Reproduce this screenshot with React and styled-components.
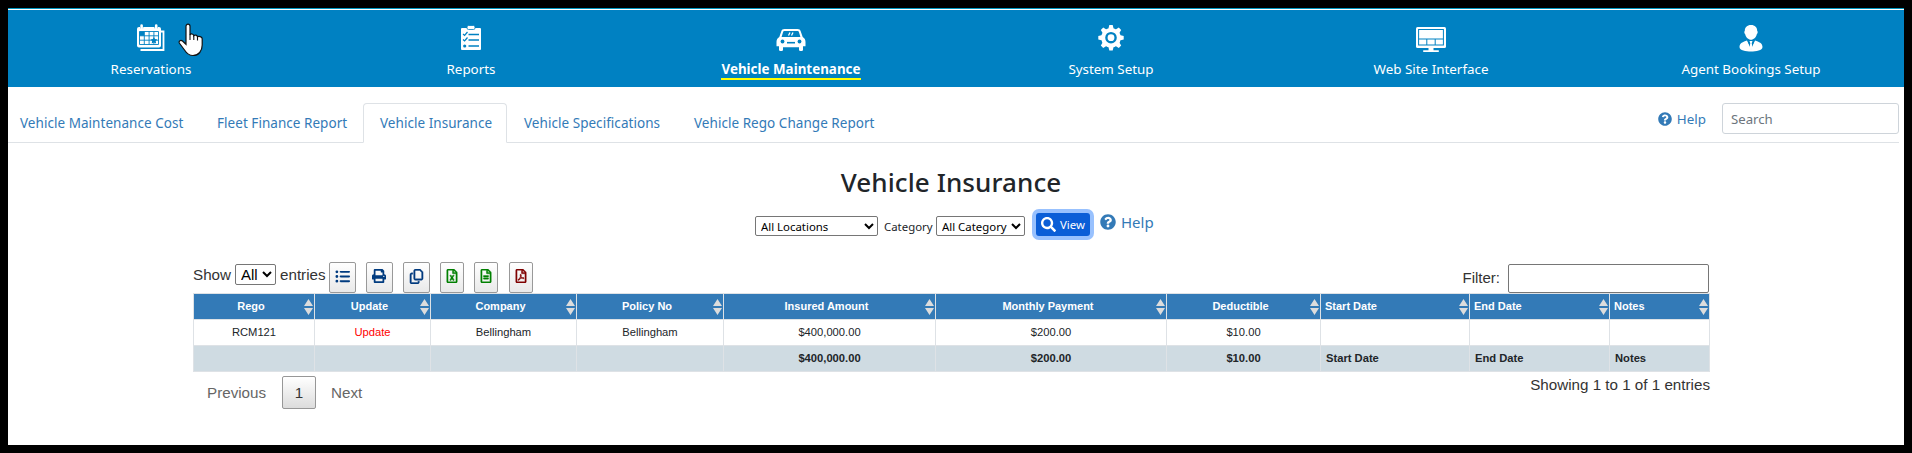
import styled, { createGlobalStyle } from "styled-components";
import {
  FaPrint,
  FaQuestionCircle,
  FaRegFileAlt,
  FaRegFileExcel,
  FaRegFilePdf,
  FaSearch,
} from "react-icons/fa";
import { FaListUl, FaRegCopy } from "react-icons/fa6";

const GlobalStyle = createGlobalStyle`
  * {
    box-sizing: border-box;
  }
  body {
    margin: 0;
    background-color: #000;
    font-family: "Noto Sans", "Open Sans", sans-serif;
    color: #212529;
  }
`;

const Page = styled.div`
  position: relative;
  width: 1896px;
  height: 437px;
  margin: 8px 8px 0 8px;
  overflow: hidden;
  background-color: #fff;
  border-top: 1px solid #0096bf;
`;

const Navbar = styled.nav`
  display: flex;
  justify-content: center;
  height: 77px;
  margin: 1px 0 0 -10px;
  background-color: #0081c2;
`;

const NavItem = styled.a`
  flex: 0 0 320px;
  display: flex;
  flex-direction: column;
  align-items: center;
  padding-top: 13px;
  color: #fff;
  svg {
    display: block;
    flex: none;
  }
`;

const NavLabel = styled.span`
  height: 22px;
  margin-top: 5px;
  line-height: 22px;
  font-size: 13.4px;
  white-space: nowrap;
  font-weight: ${(props) => (props.$active ? 700 : 400)};
  border-bottom: ${(props) => (props.$active ? "2px solid #ff0" : "0")};
`;

const TabBar = styled.div`
  display: flex;
  justify-content: space-between;
  height: 40px;
  margin: 16px 5px 0 0;
  border-bottom: 1px solid #dee2e6;
`;

const Tabs = styled.div`
  display: flex;
`;

const Tab = styled.a`
  width: ${(props) => props.$width}px;
  height: 40px;
  padding: ${(props) => (props.$first ? "0 0 0 12px" : "0 0 0 16px")};
  border: 1px solid transparent;
  border-width: ${(props) => (props.$first ? "1px 0" : "1px")};
  line-height: 39px;
  font-size: 13.5px;
  letter-spacing: 0.04px;
  white-space: nowrap;
  color: #337ab7;
  ${(props) =>
    props.$active &&
    `
    background-color: #fff;
    border-color: #dee2e6 #dee2e6 #fff;
    border-radius: 4px 4px 0 0;
  `}
`;

const TabTools = styled.div`
  display: flex;
  align-items: flex-start;
`;

const HelpLink = styled.a`
  display: flex;
  align-items: center;
  gap: 5px;
  height: 32px;
  color: #337ab7;
  font-size: ${(props) => props.$size}px;
`;

const SearchInput = styled.input`
  width: 177px;
  height: 31px;
  margin-left: 16px;
  padding: 0 8px;
  border: 1px solid #ced4da;
  border-radius: 3px;
  font: 13.2px "Noto Sans", sans-serif;
  &::placeholder {
    color: #6c757d;
  }
`;

const Title = styled.h2`
  margin: 19px 0 0 -10px;
  height: 40px;
  line-height: 40px;
  text-align: center;
  font-size: 26px;
  font-weight: 500;
  letter-spacing: 0.1px;
`;

const FilterForm = styled.div`
  display: flex;
  align-items: center;
  height: 34px;
  margin: 7px 0 0 747px;
`;

const Select = styled.select`
  width: ${(props) => props.$width}px;
  height: ${(props) => props.$height || 20}px;
  padding: 0 0 0 1px;
  background-color: #fff;
  border: 1px solid #767676;
  border-radius: 2px;
  color: #000;
  font: ${(props) => props.$font || '11.4px "Noto Sans", sans-serif'};
`;

const CategoryLabel = styled.label`
  width: 58px;
  padding-left: 6px;
  font-size: 11.4px;
  white-space: nowrap;
`;

const ViewButton = styled.button`
  display: flex;
  align-items: center;
  gap: 4px;
  width: 54px;
  height: 23px;
  margin: -3px 10px 0 11px;
  padding: 0 0 0 5px;
  border: 0;
  border-radius: 3px;
  background-color: #0b5ed7;
  box-shadow: 0 0 0 4px #98c1fe;
  color: #fff;
  font: 11.4px "Noto Sans", sans-serif;
`;

const FormHelp = styled(HelpLink)`
  margin-top: -8px;
`;

const TableSection = styled.section`
  width: 1517px;
  margin: 16px 0 0 185px;
  font-family: "Liberation Sans", Arial, sans-serif;
  color: #333;
`;

const Toolbar = styled.div`
  display: flex;
  justify-content: space-between;
  height: 34px;
`;

const LengthMenu = styled.label`
  display: flex;
  align-items: center;
  gap: 4px;
  height: 31px;
  margin-right: 3px;
  font-size: 15.2px;
`;

const ToolbarLeft = styled.div`
  display: flex;
  align-items: flex-start;
`;

const ExportButtons = styled.div`
  display: flex;
  gap: 10.2px;
  padding-top: 3px;
`;

const ExportButton = styled.button`
  display: flex;
  align-items: flex-start;
  justify-content: center;
  width: ${(props) => props.$width}px;
  height: 31px;
  padding: 6px 0 0;
  border: 1px solid #999;
  border-radius: 2px;
  background: linear-gradient(to bottom, #fff 0%, #e9e9e9 100%);
  color: ${(props) => props.$color};
`;

const FilterLabel = styled.label`
  display: flex;
  align-items: center;
  gap: 8px;
  height: 29px;
  margin: 5px 1px 0 0;
  font-size: 15px;
  line-height: 16px;
`;

const FilterText = styled.span`
  margin-top: -2px;
`;

const FilterInput = styled.input`
  width: 201px;
  height: 29px;
  border: 1px solid #767676;
  border-radius: 2px;
`;

const Table = styled.table`
  width: 1517px;
  table-layout: fixed;
  border-collapse: collapse;
  font-size: 11.2px;
  color: #212529;
`;

const HeadCell = styled.th`
  position: relative;
  height: 26px;
  padding: ${(props) => (props.$align === "left" ? "0 0 1px 4px" : "0 6px 1px 0")};
  border: 1px solid #dee2e6;
  background-color: #337ab7;
  color: #fff;
  font-size: 11px;
  text-align: ${(props) => props.$align || "center"};
`;

const Cell = styled.td`
  height: 26px;
  padding: ${(props) => (props.$align === "left" ? "0 0 1px 5px" : "0 0 1px")};
  border: 1px solid #dee2e6;
  text-align: ${(props) => props.$align || "center"};
`;

const FootCell = styled(Cell)`
  background-color: #cfdbe2;
  font-weight: 700;
`;

const UpdateLink = styled.a`
  color: #f00;
`;

const SortArrows = styled.svg`
  position: absolute;
  right: 1px;
  top: 5px;
`;

const TableFooter = styled.div`
  display: flex;
  justify-content: space-between;
  align-items: flex-start;
  padding-top: 4px;
  font-size: 15.2px;
`;

const Pagination = styled.div`
  display: flex;
  align-items: center;
  padding-left: 14px;
  color: #666;
`;

const PageNumber = styled.span`
  width: 34px;
  height: 33px;
  margin: 0 15px 0 16px;
  border: 1px solid #979797;
  border-radius: 2px;
  background: linear-gradient(to bottom, #fff 0%, #dcdcdc 100%);
  color: #333;
  line-height: 31px;
  text-align: center;
`;

const Cursor = styled.svg`
  position: absolute;
  left: 169px;
  top: 14px;
`;

const CalendarIcon = () => (
  <svg width="30" height="30" viewBox="0 0 30 30" fill="none">
    <path d="M4.5 27h23V8.5H25" stroke="#fff" strokeWidth="1.8" />
    <rect x="1" y="4" width="24" height="20.5" rx="2" fill="#fff" />
    <path d="M4 4h3.2M18.5 4h3.2" stroke="#0081c2" strokeWidth="2.4" />
    <path d="M5.6 2.5v2.500M20.2 2.500v2.500" stroke="#fff" strokeWidth="2.6" strokeLinecap="round" />
    <path
      d="M3.5 8.5h19v13h-19zM3.5 12.8h19M3.5 17.2h19M8.3 8.5v13M13.1 8.5v13M17.9 8.5v13"
      stroke="#0081c2"
      strokeWidth="0.9"
    />
    <path d="M3.5 8.5h4.8v4.3H3.5z" fill="#0081c2" />
    <path d="m17.9 14 1.1 2.1 2.4.4-1.7 1.6.4 2.3-2.2-1-2.2 1 .4-2.3-1.7-1.6 2.4-.4z" fill="#0081c2" />
  </svg>
);

const ReportIcon = () => (
  <svg width="30" height="30" viewBox="0 0 30 30" fill="none">
    <rect x="5" y="5" width="20" height="22" rx="1" fill="#fff" />
    <rect x="11" y="2.5" width="8" height="4" rx="1.5" fill="#fff" stroke="#0081c2" strokeWidth="0.8" />
    <path d="M12.5 11.5H23M12.5 17H23M12.5 23H23" stroke="#0081c2" strokeWidth="1.3" />
    <path d="m7 11 1.6 1.5L11.5 9M7 16.5 8.6 18l2.9-3.5" stroke="#0081c2" strokeWidth="1.2" />
    <circle cx="8.7" cy="23" r="1.6" fill="#0081c2" />
  </svg>
);

const CarIcon = () => (
  <svg width="30" height="30" viewBox="0 0 30 30" fill="none">
    <path
      d="M8.5 6h13c1.8 0 2.7.8 3.2 2.3L26.7 14c1.9 1.1 2.8 2.7 2.8 5v4.2H27V27c0 1.3-4 1.3-4 0v-2.8H7V27c0 1.3-4 1.3-4 0v-3.8H.5V19c0-2.3.9-3.9 2.8-5l2-5.7C5.8 6.8 6.7 6 8.5 6z"
      fill="#fff"
    />
    <path d="M8.2 8h13.6c.6 0 .8.3 1 .8l1.6 5.2H5.6l1.6-5.2c.2-.5.4-.8 1-.8z" fill="#0081c2" />
    <path d="m12.5 12.500 1.5-3M15.5 12.500l1.5-3" stroke="#fff" strokeWidth="1.3" />
    <circle cx="6.5" cy="18.5" r="1.9" fill="#0081c2" />
    <circle cx="23.5" cy="18.5" r="1.9" fill="#0081c2" />
    <path d="M11 19.7h8" stroke="#0081c2" strokeWidth="1.6" />
  </svg>
);

const GearIcon = () => (
  <svg width="30" height="30" viewBox="0 0 30 30" fill="none">
    <circle cx="15" cy="14.7" r="7.8" stroke="#fff" strokeWidth="4" />
    {[0, 45, 90, 135, 180, 225, 270, 315].map((angle) => (
      <path
        key={angle}
        d="M12.3 6l1-4h3.4l1 4z"
        fill="#fff"
        transform={`rotate(${angle} 15 14.7)`}
      />
    ))}
    <circle cx="15" cy="14.7" r="3.4" fill="#fff" />
  </svg>
);

const MonitorIcon = () => (
  <svg width="30" height="30" viewBox="0 0 30 30" fill="none">
    <rect y="4" width="30" height="21" rx="1.5" fill="#fff" />
    <rect x="2.6" y="6.5" width="24.8" height="15.5" stroke="#0081c2" />
    <path d="M2.6 16h24.8M10.8 16v6M19.2 16v6" stroke="#0081c2" />
    <path d="M12.5 25h5v2.3h5.3V29H7.2v-1.7h5.3z" fill="#fff" />
  </svg>
);

const AgentIcon = () => (
  <svg width="30" height="30" viewBox="0 0 30 30">
    <path
      d="M15 2c4 0 6.2 2.4 6.2 6 .9.5.5 2.5-.4 3.2-.8 3.2-3.2 5.500-5.800 5.500s-5-2.300-5.800-5.500c-.9-.7-1.300-2.700-.4-3.200C8.800 4.400 11 2 15 2z"
      fill="#fff"
    />
    <path
      d="M11 17.5c-4 1.4-7.5 2.6-7.5 6.5C3.5 27.5 10 28.5 15 28.5S26.5 27.5 26.5 24c0-3.9-3.5-5.1-7.5-6.5L15 26z"
      fill="#fff"
    />
    <path d="m11.5 17.5 3.5 9 3.5-9z" fill="#0081c2" />
    <path d="m13.5 18h3l-.8 2.2 1 4.6L15 27l-1.7-2.2 1-4.6z" fill="#fff" />
  </svg>
);

const navItems = [
  { label: "Reservations", icon: <CalendarIcon /> },
  { label: "Reports", icon: <ReportIcon /> },
  { label: "Vehicle Maintenance", icon: <CarIcon />, active: true },
  { label: "System Setup", icon: <GearIcon /> },
  { label: "Web Site Interface", icon: <MonitorIcon /> },
  { label: "Agent Bookings Setup", icon: <AgentIcon /> },
];

const tabs = [
  { label: "Vehicle Maintenance Cost", width: 192, first: true },
  { label: "Fleet Finance Report", width: 163 },
  { label: "Vehicle Insurance", width: 144, active: true },
  { label: "Vehicle Specifications", width: 170 },
  { label: "Vehicle Rego Change Report", width: 214 },
];

const exportButtons = [
  { width: 27, color: "#003b7f", icon: <FaListUl size={15} /> },
  { width: 27, color: "#003b7f", icon: <FaPrint size={14} /> },
  { width: 27, color: "#003b7f", icon: <FaRegCopy size={15} strokeWidth={14} /> },
  { width: 24, color: "#008000", icon: <FaRegFileExcel size={14} strokeWidth={14} /> },
  { width: 24, color: "#008000", icon: <FaRegFileAlt size={14} strokeWidth={14} /> },
  { width: 24, color: "#800000", icon: <FaRegFilePdf size={14} strokeWidth={14} /> },
];

const columns = [
  { name: "Rego", width: 121, value: "RCM121" },
  { name: "Update", width: 116, value: <UpdateLink>Update</UpdateLink> },
  { name: "Company", width: 146, value: "Bellingham" },
  { name: "Policy No", width: 147, value: "Bellingham" },
  { name: "Insured Amount", width: 212, value: "$400,000.00", total: "$400,000.00" },
  { name: "Monthly Payment", width: 231, value: "$200.00", total: "$200.00" },
  { name: "Deductible", width: 154, value: "$10.00", total: "$10.00" },
  { name: "Start Date", width: 149, total: "Start Date", align: "left" },
  { name: "End Date", width: 140, total: "End Date", align: "left" },
  { name: "Notes", width: 100, total: "Notes", align: "left" },
];

const InsuranceTable = () => {
  return (
    <Table>
      <colgroup>
        {columns.map((col) => (
          <col key={col.name} width={col.width} />
        ))}
      </colgroup>
      <thead>
        <tr>
          {columns.map((col) => (
            <HeadCell key={col.name} $align={col.align}>
              {col.name}
              <SortArrows width="9" height="16" viewBox="0 0 9 16" fill="#dcdcdc">
                <path d="M4.5 0 9 7H0zM0 9h9l-4.5 7z" />
              </SortArrows>
            </HeadCell>
          ))}
        </tr>
      </thead>
      <tbody>
        <tr>
          {columns.map((col) => (
            <Cell key={col.name} $align={col.align}>
              {col.value}
            </Cell>
          ))}
        </tr>
      </tbody>
      <tfoot>
        <tr>
          {columns.map((col) => (
            <FootCell key={col.name} $align={col.align}>
              {col.total}
            </FootCell>
          ))}
        </tr>
      </tfoot>
    </Table>
  );
};

const App = () => {
  return (
    <>
      <GlobalStyle />
      <Page>
        <Navbar>
          {navItems.map((item) => (
            <NavItem key={item.label}>
              {item.icon}
              <NavLabel $active={item.active}>{item.label}</NavLabel>
            </NavItem>
          ))}
        </Navbar>
        <TabBar>
          <Tabs>
            {tabs.map((tab) => (
              <Tab key={tab.label} $width={tab.width} $active={tab.active} $first={tab.first}>
                {tab.label}
              </Tab>
            ))}
          </Tabs>
          <TabTools>
            <HelpLink $size={13.4}>
              <FaQuestionCircle size={14} />
              Help
            </HelpLink>
            <SearchInput placeholder="Search" />
          </TabTools>
        </TabBar>
        <Title>Vehicle Insurance</Title>
        <FilterForm>
          <Select $width={123}>
            <option>All Locations</option>
          </Select>
          <CategoryLabel>Category</CategoryLabel>
          <Select $width={89}>
            <option>All Category</option>
          </Select>
          <ViewButton>
            <FaSearch size={15} />
            View
          </ViewButton>
          <FormHelp $size={15}>
            <FaQuestionCircle size={16} />
            Help
          </FormHelp>
        </FilterForm>
        <TableSection>
          <Toolbar>
            <ToolbarLeft>
              <LengthMenu>
                Show
                <Select $width={41} $height={21} $font={'15px "Liberation Sans", sans-serif'}>
                  <option>All</option>
                </Select>
                entries
              </LengthMenu>
              <ExportButtons>
                {exportButtons.map((button, i) => (
                  <ExportButton key={i} $width={button.width} $color={button.color}>
                    {button.icon}
                  </ExportButton>
                ))}
              </ExportButtons>
            </ToolbarLeft>
            <FilterLabel>
              <FilterText>Filter:</FilterText>
              <FilterInput />
            </FilterLabel>
          </Toolbar>
          <InsuranceTable />
          <TableFooter>
            <Pagination>
              Previous
              <PageNumber>1</PageNumber>
              Next
            </Pagination>
            <span>Showing 1 to 1 of 1 entries</span>
          </TableFooter>
        </TableSection>
        <Cursor width="27" height="34" viewBox="0 0 27 34">
          <path
            d="M9 3.2C9 .4 13 .4 13 3.2V12c.6-1.6 3.6-1.3 3.8.7.9-1.2 3.5-.7 3.7 1.2 1.2-1 4.7-.2 4.7 1.9V22c0 6-3.5 10.500-9.200 10.500-4.300 0-6.300-2-8.500-5.500L2.300 20c-1-1.800 1.400-3.700 3.200-2L9 21.300z"
            fill="#fff"
            stroke="#111"
            strokeWidth="1.2"
          />
          <path d="M13 11.5V17M16.8 12.5V17M20.5 13.8V17.5" stroke="#111" strokeWidth="1.1" />
        </Cursor>
      </Page>
    </>
  );
};

export default App;
